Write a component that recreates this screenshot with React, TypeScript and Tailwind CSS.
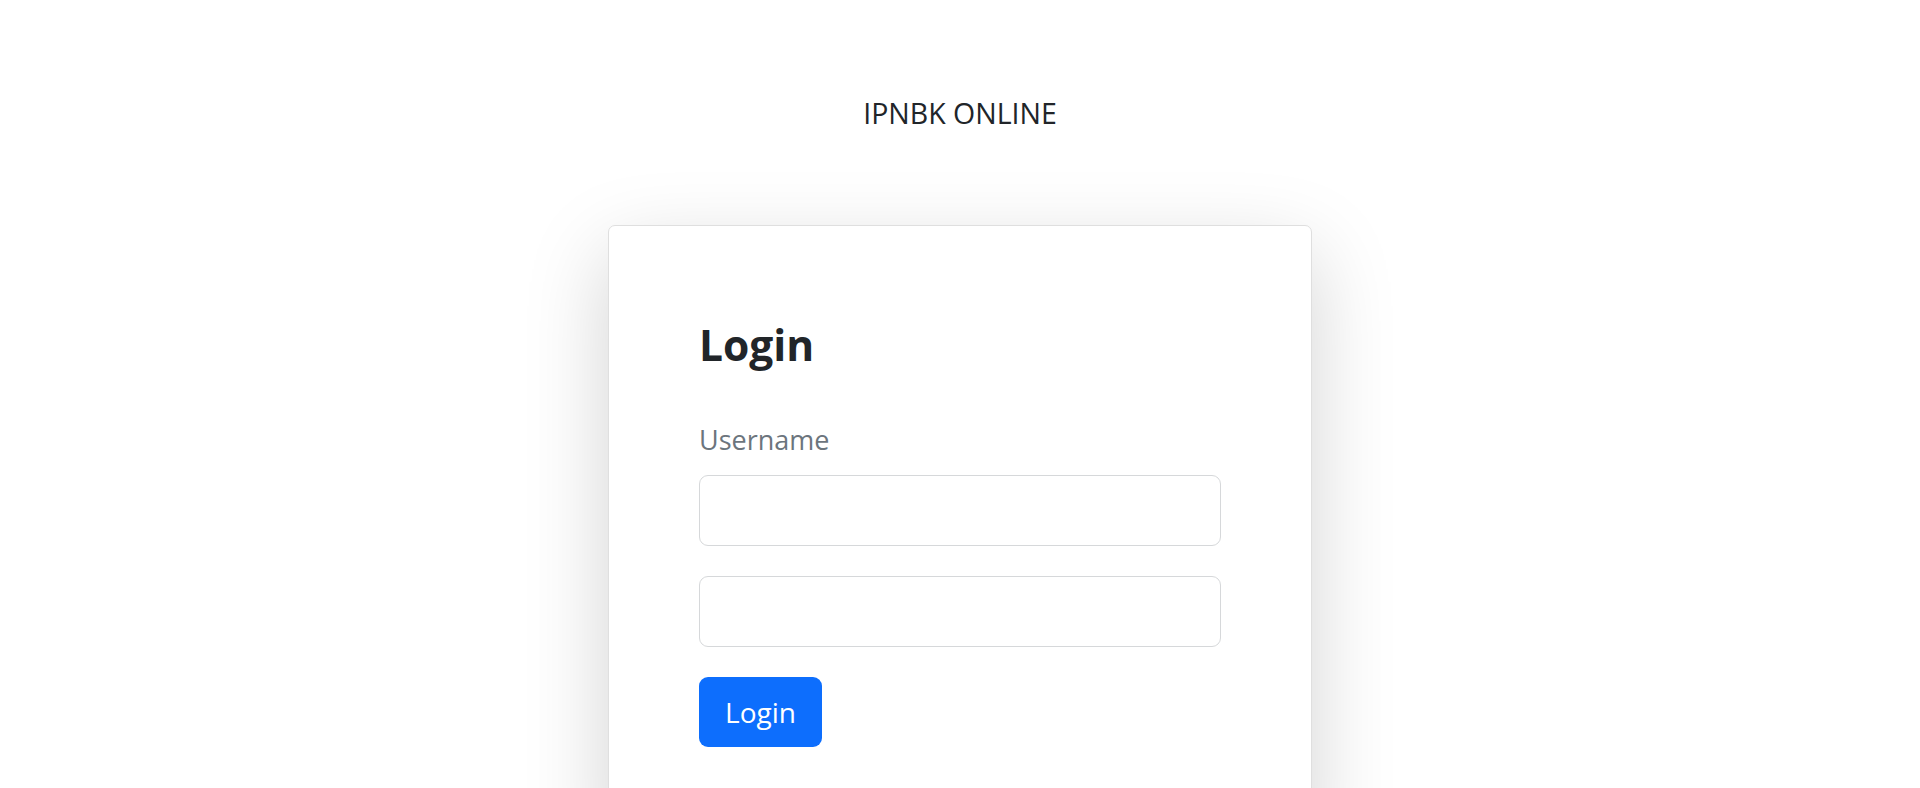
import { useState } from "react";

const App = () => {
  const [username, setUsername] = useState("");
  const [password, setPassword] = useState("");

  return (
    <div className="h-[788px] overflow-hidden bg-white font-['Open_Sans','Noto_Sans',sans-serif] text-[#212529]">
      {/* Header */}
      <div className="pt-[92px] text-center text-[28.5px] leading-[42px]">IPNBK ONLINE</div>

      {/* Login card */}
      <div className="mx-auto mt-[91px] w-[704px] rounded-[7px] border border-[#dfdfdf] bg-white px-[90px] pt-[94px] pb-[95px] shadow-[0_28px_84px_rgba(0,0,0,0.175)]">
        <h1 className="text-[42.5px] font-bold leading-[50px]">Login</h1>

        <form
          className="mt-[50px] flex flex-col"
          onSubmit={(e) => e.preventDefault()}
        >
          <label className="text-[27px] leading-[39px] text-[#6c757d]">Username</label>
          <input
            value={username}
            onChange={(e) => setUsername(e.target.value)}
            className="mt-[16px] h-[71px] w-full rounded-[9px] border border-[#d6d8da] px-5 text-[26px] outline-none"
          />
          <input
            type="password"
            value={password}
            onChange={(e) => setPassword(e.target.value)}
            className="mt-[30px] h-[71px] w-full rounded-[9px] border border-[#d6d8da] px-5 text-[26px] outline-none"
          />
          <div className="mt-[30px]">
            <button
              type="submit"
              className="flex h-[70px] w-[123px] items-center justify-center rounded-[9px] bg-[#0d6efd] text-[28px] leading-[42px] text-white"
            >
              Login
            </button>
          </div>
        </form>
      </div>
    </div>
  );
};

export default App;
